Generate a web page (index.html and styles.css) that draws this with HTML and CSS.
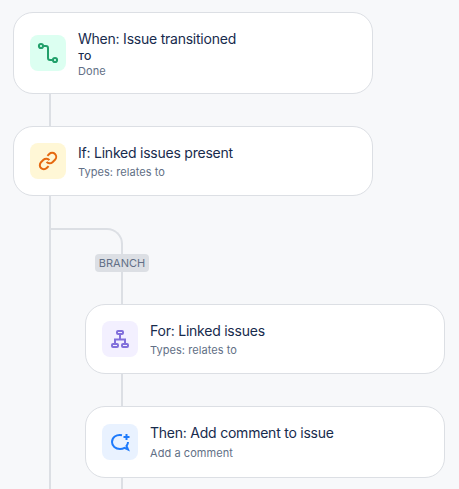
FILE: index.html
```html
<!DOCTYPE html>
<html lang="en">
<head>
    <meta charset="UTF-8">
    <meta name="viewport" content="width=device-width, initial-scale=1.0">
    <title>Automation rule</title>
    <link rel="stylesheet" href="styles.css">
</head>
<body>
    <div class="rule">
        <div class="card trigger">
            <div class="icon green">
                <svg width="24" height="24" viewBox="0 0 24 24">
                    <circle cx="5" cy="5" r="2.1"/>
                    <circle cx="19" cy="19" r="2.1"/>
                    <path d="M7 5H10a2 2 0 0 1 2 2v10a2 2 0 0 0 2 2h3"/>
                </svg>
            </div>
            <div class="text">
                <div class="title">When: Issue transitioned</div>
                <div class="label">TO</div>
                <div class="value">Done</div>
            </div>
        </div>
        <div class="line"></div>

        <div class="card">
            <div class="icon yellow">
                <svg width="24" height="24" viewBox="0 0 24 24">
                    <path d="M10.600 12.800a4 4 0 0 0 5.900.4l2.500-2.500a4 4 0 0 0-5.700-5.700l-1.900 1.900"/>
                    <path d="M13.400 11.200a4 4 0 0 0-5.900-.4l-2.500 2.500a4 4 0 0 0 5.700 5.700l1.900-1.900"/>
                </svg>
            </div>
            <div class="text">
                <div class="title">If: Linked issues present</div>
                <div class="subtitle">Types: relates to</div>
            </div>
        </div>

        <div class="branch">
            <div class="elbow"></div>
            <div class="badge">BRANCH</div>
            <div class="line"></div>
            <div class="card">
                <div class="icon purple">
                    <svg width="24" height="24" viewBox="0 0 24 24">
                        <rect x="9" y="4" width="6" height="3" rx="1"/>
                        <rect x="4" y="17" width="6" height="3" rx="1"/>
                        <rect x="14" y="17" width="6" height="3" rx="1"/>
                        <path d="M12 7v5M7 17v-4.500h10V17"/>
                    </svg>
                </div>
                <div class="text">
                    <div class="title">For: Linked issues</div>
                    <div class="subtitle">Types: relates to</div>
                </div>
            </div>
            <div class="line"></div>
            <div class="card action">
                <div class="icon blue">
                    <svg width="24" height="24" viewBox="0 0 24 24">
                        <path d="M14 5.200C8 4.200 4 7.500 4 12c0 4 3.500 7 8 7 1.700 0 3.200-.4 4.500-1.100L20 19.500l-1.500-3.500c.9-1.100 1.500-2.500 1.500-4"/>
                        <path d="M18.500 4v6M15.500 7h6"/>
                    </svg>
                </div>
                <div class="text">
                    <div class="title">Then: Add comment to issue</div>
                    <div class="subtitle">Add a comment</div>
                </div>
            </div>
            <div class="line"></div>
        </div>
    </div>
</body>
</html>
```
FILE: styles.css
```css
body {
    margin: 0;
    height: 100vh;
    overflow: hidden;
    background-color: #f7f8fa;
    color: #172b4d;
    font-family: Inter, sans-serif;
}

.rule {
    display: flex;
    flex-direction: column;
    height: 100vh;
    box-sizing: border-box;
    padding: 12px 13px 0;
}

.card {
    display: flex;
    align-items: center;
    gap: 12px;
    flex-shrink: 0;
    box-sizing: border-box;
    width: 360px;
    height: 70px;
    padding: 0 16px;
    background-color: #fff;
    border: 1px solid #dcdfe4;
    border-radius: 20px;
}

.trigger {
    height: 82px;
}

.action {
    height: 72px;
}

.icon {
    display: flex;
    align-items: center;
    justify-content: center;
    width: 36px;
    height: 36px;
    border-radius: 8px;
}

.icon svg {
    fill: none;
    stroke: currentColor;
    stroke-width: 2;
}

.green {
    background-color: #dcfff1;
    color: #22a06b;
}

.yellow {
    background-color: #fff7d6;
    color: #e56910;
}

.purple {
    background-color: #f3f0ff;
    color: #8270db;
}

.blue {
    background-color: #e9f2ff;
    color: #1d7afc;
}

.title {
    font-size: 14px;
    line-height: 20px;
    letter-spacing: -0.23px;
}

.label {
    margin-top: 1px;
    font-size: 9.5px;
    font-weight: 600;
    line-height: 14px;
}

.value,
.subtitle {
    color: #626f86;
    font-size: 11px;
    line-height: 14px;
    letter-spacing: 0.06px;
}

.trigger .text {
    padding-top: 1px;
}

.subtitle {
    margin-top: 2px;
}

.action .text {
    padding-bottom: 2px;
}

.line {
    flex-shrink: 0;
    width: 2px;
    height: 32px;
    margin-left: 36px;
    background-color: #dcdfe4;
}

.branch {
    flex: 1;
    margin-left: 36px;
    padding-top: 32px;
    border-left: 2px solid #dcdfe4;
}

.branch .line {
    margin-left: 70px;
}

.branch .card {
    margin-left: 34px;
}

.action .subtitle {
    margin-top: 3px;
}

.elbow {
    box-sizing: border-box;
    width: 72px;
    height: 26px;
    border: solid #dcdfe4;
    border-width: 2px 2px 0 0;
    border-top-right-radius: 16px;
}

.badge {
    width: 54px;
    height: 18px;
    margin-left: 44px;
    border-radius: 4px;
    background-color: #dcdfe4;
    color: #626f86;
    font-size: 11px;
    line-height: 18px;
    text-align: center;
}
```
